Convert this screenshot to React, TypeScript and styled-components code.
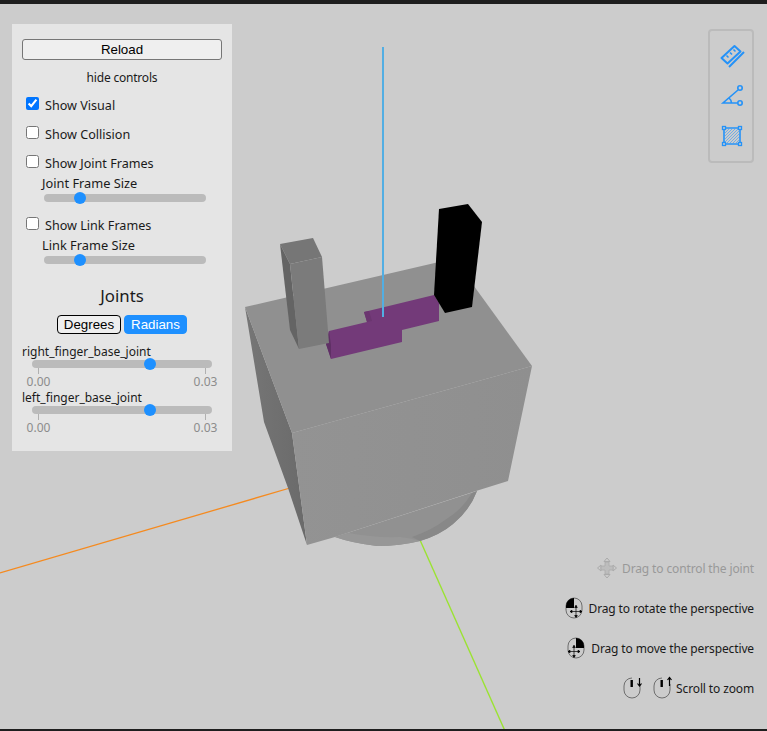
import styled, { createGlobalStyle } from 'styled-components';

const GlobalStyle = createGlobalStyle`
  html, body, #root {
    margin: 0;
    height: 100%;
  }
  body {
    font-family: 'Noto Sans', 'Open Sans', sans-serif;
    background: #cccccc;
    overflow: hidden;
  }
`;

const Page = styled.div`
  height: 731px;
  display: flex;
  flex-direction: column;
`;

const TopBar = styled.div`
  height: 4px;
  background: #1e1e1e;
`;

const BottomBar = styled.div`
  height: 2px;
  background: #1e1e1e;
`;

const Viewer = styled.main`
  position: relative;
  flex: 1;
  background: #cccccc;
  overflow: hidden;
`;

const Scene = styled.svg`
  position: absolute;
  left: 0;
  top: -4px;
  width: 767px;
  height: 731px;
`;

const Panel = styled.aside`
  position: absolute;
  left: 12px;
  top: 20px;
  box-sizing: border-box;
  width: 220px;
  height: 427px;
  padding: 15px 10px 0;
  background: #e5e5e5;
  color: #1a1a1a;
  font-size: 12px;
  display: flex;
  flex-direction: column;
`;

const ReloadButton = styled.button`
  width: 200px;
  height: 21px;
  padding: 0;
  border: 1px solid #767676;
  border-radius: 3px;
  background: #efefef;
  color: #000;
  font: 13.33px 'Liberation Sans', sans-serif;
`;

const HideControls = styled.div`
  height: 20px;
  margin: 8px 0 7px;
  line-height: 20px;
  text-align: center;
  letter-spacing: -0.2px;
`;

const CheckRow = styled.label<{ $gap?: number }>`
  display: flex;
  align-items: center;
  height: 20px;
  margin-bottom: ${(p) => p.$gap ?? 9}px;
  padding-left: 4px;
  font-size: 12.6px;
  input {
    width: 13px;
    height: 13px;
    margin: 0 6px 3px 0;
  }
`;

const SizeLabel = styled.div`
  height: 16px;
  line-height: 14px;
  padding-left: 20px;
  font-size: 12.8px;
`;

const Track = styled.input<{ $width: number }>`
  appearance: none;
  display: block;
  width: ${(p) => p.$width}px;
  height: 8px;
  margin: 0;
  border-radius: 4px;
  background: #bbbbbb;
  outline: none;
  &::-webkit-slider-thumb {
    appearance: none;
    width: 12px;
    height: 12px;
    border-radius: 50%;
    background: #1e90ff;
  }
`;

const SizeSlider = styled.div<{ $gap: number }>`
  padding: 2px 0 0 22px;
  margin-bottom: ${(p) => p.$gap}px;
`;

const JointsTitle = styled.h3`
  margin: 0;
  height: 24px;
  line-height: 24px;
  font-size: 16.8px;
  font-weight: 400;
  text-align: center;
`;

const UnitRow = styled.div`
  display: flex;
  justify-content: center;
  gap: 3px;
  margin: 7px 0 10px;
`;

const UnitButton = styled.button<{ $active?: boolean }>`
  width: ${(p) => (p.$active ? 63 : 64)}px;
  height: 19px;
  padding: 0;
  border: 1px solid ${(p) => (p.$active ? '#1e90ff' : '#000')};
  border-radius: 4px;
  background: ${(p) => (p.$active ? '#1e90ff' : '#efefef')};
  color: ${(p) => (p.$active ? '#fff' : '#000')};
  font: 13.33px 'Liberation Sans', sans-serif;
`;

const JointBlock = styled.div`
  height: 46px;
`;

const JointName = styled.div`
  height: 16px;
  line-height: 16px;
`;

const JointBody = styled.div`
  padding: 0 10px;
`;

const Ticks = styled.div`
  display: flex;
  justify-content: space-between;
  padding: 0 6px;
`;

const Tick = styled.div`
  position: relative;
  width: 1px;
  height: 6px;
  background: #b0b0b0;
`;

const TickText = styled.span`
  position: absolute;
  top: 8px;
  left: -20px;
  width: 41px;
  text-align: center;
  color: #8c8c8c;
  font-size: 12px;
  line-height: 12px;
`;

const Toolbar = styled.nav`
  position: absolute;
  right: 13px;
  top: 25px;
  box-sizing: border-box;
  width: 46px;
  height: 134px;
  padding: 13px 0;
  border: 2px solid #bbbbbb;
  border-radius: 4px;
  display: flex;
  flex-direction: column;
  align-items: center;
  gap: 16px;
`;

const ToolIcon = styled.svg`
  display: block;
  width: 24px;
  height: 24px;
  overflow: visible;
  fill: none;
  stroke: #2492f8;
  stroke-width: 1.6;
`;

const HelpList = styled.div`
  position: absolute;
  right: 13px;
  top: 554px;
  display: flex;
  flex-direction: column;
  gap: 20px;
`;

const HelpRow = styled.div<{ $muted?: boolean }>`
  display: flex;
  align-items: center;
  justify-content: flex-end;
  gap: 5px;
  height: 20px;
  font-size: 12px;
  letter-spacing: -0.13px;
  color: ${(p) => (p.$muted ? '#999999' : '#1a1a1a')};
`;

const HelpIcon = styled.svg`
  display: block;
  width: 20px;
  height: 22px;
  overflow: visible;
`;

const ScrollGlyph = styled(HelpIcon)`
  & + & {
    margin-left: 5px;
    margin-right: -2px;
  }
`;

function Slider({ width, value }: { width: number; value: number }) {
  return <Track type="range" $width={width} min={0} max={100} step={0.1} defaultValue={value} />;
}

function Joint({ name }: { name: string }) {
  return (
    <JointBlock>
      <JointName>{name}</JointName>
      <JointBody>
        <Slider width={180} value={66.6} />
        <Ticks>
          <Tick>
            <TickText>0.00</TickText>
          </Tick>
          <Tick>
            <TickText>0.03</TickText>
          </Tick>
        </Ticks>
      </JointBody>
    </JointBlock>
  );
}

function RobotScene() {
  return (
    <Scene viewBox="0 0 767 731">
      <defs>
        <linearGradient id="frontFace" x1="0" y1="0" x2="1" y2="0">
          <stop offset="0" stopColor="#939393" />
          <stop offset="1" stopColor="#8f8f8f" />
        </linearGradient>
        <linearGradient id="sideFace" x1="0" y1="0" x2="1" y2="0">
          <stop offset="0" stopColor="#767676" />
          <stop offset="1" stopColor="#6a6a6a" />
        </linearGradient>
      </defs>
      <line x1="0" y1="573" x2="290" y2="488" stroke="#f58a1f" strokeWidth="1.3" />
      <line x1="420" y1="540" x2="505" y2="731" stroke="#9be332" strokeWidth="1.4" />
      {/* cylinder under the base */}
      <path d="M335 537 Q352 543 377 546 Q400 546 420 541 Q440 535 453 524 Q470 510 477 491Z" fill="#919191" />
      <path d="M335 537 Q352 543 377 546 Q400 546 420 541 Q410 538 400 537 Q375 538 348 533Z" fill="#979797" />
      <path d="M420 541 Q440 535 453 524 Q470 510 477 491 L472 493 Q462 510 445 520 Q432 530 412 537Z" fill="#888888" />
      {/* base block */}
      <path d="M245 307 L264 422 L288 488 L307 545 L292 433Z" fill="url(#sideFace)" />
      <path d="M292 433 L532 366 L508 481 L476 491 L335 537 L307 545Z" fill="url(#frontFace)" />
      <path d="M245 307 L454 258.5 L532 366 L292 433Z" fill="#909090" />
      {/* purple gripper rail */}
      <path d="M364 312 L434 295 L439 303 L439 321 L402 330 L402 342 L331 359 L326 344 L329 331 L367 322Z" fill="#733a79" />
      <path d="M326 344 L329 331 L331 345 L331 359Z" fill="#5f3065" />
      <path d="M364 312 L367 322 L372 321 L369 311Z" fill="#6b3670" />
      {/* right finger */}
      <path d="M280 244 L313 238 L322 257 L290 264Z" fill="#767676" />
      <path d="M280 244 L290 264 L299 349 L290 330Z" fill="#646464" />
      <path d="M290 264 L322 257 L329 343 L299 349Z" fill="#7b7b7b" />
      {/* left finger */}
      <path d="M439 209 L468 204 L482 222 L472 307 L445 313 L434 295Z" fill="#000000" />
      {/* z axis */}
      <line x1="383" y1="47" x2="383" y2="317" stroke="#52aee3" strokeWidth="2" />
    </Scene>
  );
}

function RulerIcon() {
  return (
    <ToolIcon viewBox="0 0 24 24">
      <path d="M2.5 14 L15.5 2 L21.5 7.5 L8.5 19.5Z" strokeWidth="2" strokeLinejoin="round" />
      <path d="M7.5 11.5 L9.5 13.5 M11 8.5 L13 10.5 M14.5 5.5 L16.5 7.5" strokeWidth="1.6" />
      <path d="M10 23 L25 8" strokeWidth="2" />
    </ToolIcon>
  );
}

function AngleIcon() {
  return (
    <ToolIcon viewBox="0 0 24 24">
      <path d="M19 6 L4 19 L18.5 19 M10 14 Q12.5 16 12.5 19" />
      <circle cx="21" cy="4" r="2.2" />
      <circle cx="21" cy="19" r="2.2" />
    </ToolIcon>
  );
}

function AreaIcon() {
  return (
    <ToolIcon viewBox="0 0 24 24">
      <path
        d="M6 9 L10 5 M6 12 L13 5 M6 15 L16 5 M6 18 L19 5 M8 19 L20 7 M11 19 L20 10 M14 19 L20 13 M17 19 L20 16"
        stroke="#6aa9e8"
        strokeWidth="0.9"
      />
      <path d="M5 4 H21 V20 H5Z" />
      <g fill="#cccccc" strokeWidth="1.3">
        <rect x="3.5" y="2.5" width="3" height="3" />
        <rect x="19.5" y="2.5" width="3" height="3" />
        <rect x="3.5" y="18.5" width="3" height="3" />
        <rect x="19.5" y="18.5" width="3" height="3" />
      </g>
    </ToolIcon>
  );
}

function MoveIcon() {
  return (
    <HelpIcon viewBox="0 0 20 22">
      <g fill="#cccccc" stroke="#ababab" strokeWidth="1" strokeLinejoin="round">
        <path d="M10 1 L13 4.5 H7Z" />
        <path d="M10 21 L13 17.5 H7Z" />
        <path d="M0.5 11 L4 8 V14Z" />
        <path d="M19.5 11 L16 8 V14Z" />
      </g>
      <path d="M8 5 H12 V9 H16 V13 H12 V17 H8 V13 H4 V9 H8Z" fill="#bdbdbd" stroke="#ababab" strokeWidth="0.8" />
    </HelpIcon>
  );
}

function MouseButtonIcon({ right }: { right?: boolean }) {
  const quad = right ? 'M10 1 H10.5 A8 8 0 0 1 18 9 V11 H10Z' : 'M10 1 H9.5 A8 8 0 0 0 2 9 V11 H10Z';
  const cx = right ? 8 : 12;
  const arrows = `M${cx} 8 V20 M${cx - 6} 14.5 H${cx + 6} M${cx} 8.5 l-1.3 2 h2.6Z M${cx} 20.5 l-1.3 -2 h2.6Z M${cx - 6} 14.5 l2 -1.3 v2.6Z M${cx + 6} 14.5 l-2 -1.3 v2.6Z`;
  return (
    <HelpIcon viewBox="0 0 20 22">
      <rect x="2" y="1" width="16" height="20" rx="8" fill="none" stroke="#555" strokeWidth="0.8" />
      <path d={quad} fill="#000" />
      <path d={arrows} stroke="#000" strokeWidth="0.7" fill="#000" />
    </HelpIcon>
  );
}

function ScrollIcon({ up }: { up?: boolean }) {
  return (
    <ScrollGlyph viewBox="0 0 20 22">
      <path d="M9 1 A8 8 0 0 0 1 9 V13 A8 8 0 0 0 17 13 V7" fill="none" stroke="#555" strokeWidth="0.8" />
      <rect x="7.5" y="3" width="2.4" height="7" fill="#000" />
      {up ? (
        <path d="M16.5 9 V1 M14.5 3 L16.5 0.5 L18.5 3" fill="none" stroke="#000" strokeWidth="1.2" />
      ) : (
        <path d="M16.5 1 V9 M14.5 6.5 L16.5 9 L18.5 6.5" fill="none" stroke="#000" strokeWidth="1.2" />
      )}
    </ScrollGlyph>
  );
}

export default function App() {
  return (
    <Page>
      <GlobalStyle />
      <TopBar />
      <Viewer>
        <RobotScene />
        <Panel>
          <ReloadButton>Reload</ReloadButton>
          <HideControls>hide controls</HideControls>
          <CheckRow>
            <input type="checkbox" defaultChecked />
            Show Visual
          </CheckRow>
          <CheckRow>
            <input type="checkbox" />
            Show Collision
          </CheckRow>
          <CheckRow $gap={3}>
            <input type="checkbox" />
            Show Joint Frames
          </CheckRow>
          <SizeLabel>Joint Frame Size</SizeLabel>
          <SizeSlider $gap={13}>
            <Slider width={162} value={20} />
          </SizeSlider>
          <CheckRow $gap={3}>
            <input type="checkbox" />
            Show Link Frames
          </CheckRow>
          <SizeLabel>Link Frame Size</SizeLabel>
          <SizeSlider $gap={20}>
            <Slider width={162} value={20} />
          </SizeSlider>
          <JointsTitle>Joints</JointsTitle>
          <UnitRow>
            <UnitButton>Degrees</UnitButton>
            <UnitButton $active>Radians</UnitButton>
          </UnitRow>
          <Joint name="right_finger_base_joint" />
          <Joint name="left_finger_base_joint" />
        </Panel>
        <Toolbar>
          <RulerIcon />
          <AngleIcon />
          <AreaIcon />
        </Toolbar>
        <HelpList>
          <HelpRow $muted>
            <MoveIcon />
            Drag to control the joint
          </HelpRow>
          <HelpRow>
            <MouseButtonIcon />
            Drag to rotate the perspective
          </HelpRow>
          <HelpRow>
            <MouseButtonIcon right />
            Drag to move the perspective
          </HelpRow>
          <HelpRow>
            <ScrollIcon />
            <ScrollIcon up />
            Scroll to zoom
          </HelpRow>
        </HelpList>
      </Viewer>
      <BottomBar />
    </Page>
  );
}
